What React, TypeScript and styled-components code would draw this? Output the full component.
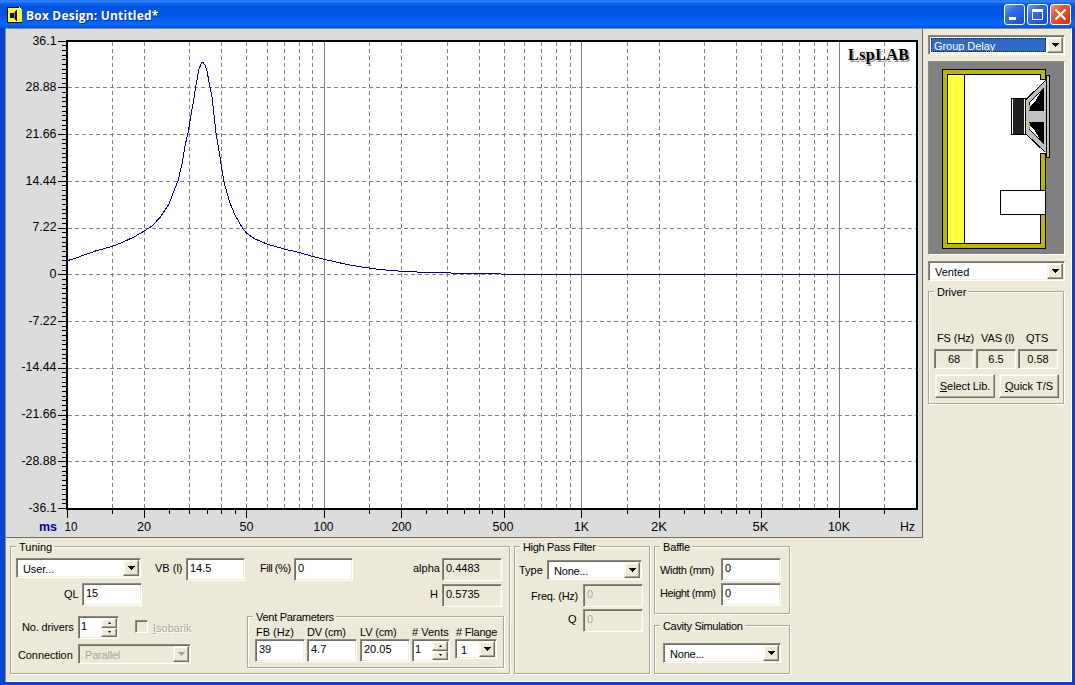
import React from "react";
import styled, { createGlobalStyle, css } from "styled-components";

const face = "#ece9d8";
const shade = "#aca899";
const dark = "#716f64";

const GlobalStyle = createGlobalStyle`
  * { box-sizing: border-box; }
  html, body { margin: 0; padding: 0; overflow: hidden; }
  body { font-family: "Liberation Sans", Arial, sans-serif; font-size: 11px; line-height: 13px; color: #000; }
`;

const Window = styled.div`
  width: 1075px;
  height: 685px;
  display: flex;
  flex-direction: column;
  background: ${face};
  border-style: solid;
  border-width: 0 3px 3px 5px;
  border-color: #0842d0;
  box-shadow: inset 1px 0 0 #7d8fae, inset -1px -1px 0 #fff;
`;

const TitleBar = styled.header`
  height: 28px;
  flex: none;
  margin: 0 -3px 0 -5px;
  padding: 1px 4px 0 7px;
  display: flex;
  align-items: center;
  background: linear-gradient(#1c6af0 0, #3a8cff 1px, #1468f0 3px, #0055e2 6px, #0054e3 14px, #0560f6 20px, #0668ff 25px, #0450d8 28px);
`;

const Title = styled.h1`
  flex: 1;
  margin: 2px 0 0 4px;
  font: bold 12px/16px "Open Sans", "Noto Sans", sans-serif;
  letter-spacing: 0.2px;
  color: #fff;
  text-shadow: 1px 1px 0 #0a2f86;
`;

const CaptionButton = styled.button<{ $close?: boolean }>`
  width: 21px;
  height: 21px;
  margin-left: 2px;
  padding: 0;
  display: flex;
  border: 1px solid #fff;
  border-radius: 3px;
  background: ${(p) =>
    p.$close
      ? "linear-gradient(135deg, #f0a088 0, #e0603c 30%, #d8421a 75%, #b83410 100%)"
      : "linear-gradient(135deg, #7ca4f4 0, #3c70e8 30%, #2258dc 75%, #1c48c0 100%)"};
  svg { display: block; }
`;

const Client = styled.main`
  flex: 1;
  display: flex;
  flex-direction: column;
  margin-right: 1px;
  border-top: 1px solid #8d8b80;
  border-left: 1px solid #8d8b80;
`;

const Upper = styled.section`
  height: 509px;
  display: flex;
`;

const ChartPanel = styled.div`
  width: 917px;
  height: 509px;
  background: #dcdcdc;
  border-right: 1px solid ${dark};
  border-bottom: 1px solid ${dark};
  svg { display: block; }
`;

const SidePanel = styled.aside`
  width: 142px;
  padding: 6px 0 0 5px;
  display: flex;
  flex-direction: column;
`;

const Diagram = styled.div`
  width: 137px;
  height: 194px;
  margin: 6px 0;
  border: 1px solid;
  border-color: #8d8b80 #fff #fff #8d8b80;
  background: #808080;
  svg { display: block; margin: -1px; }
`;

const Lower = styled.section`
  display: flex;
  gap: 4px;
  padding: 8px 0 0 4px;
`;

const Stack = styled.div`
  display: flex;
  flex-direction: column;
`;

const GroupBox = styled.fieldset<{ $w: number; $h: number }>`
  width: ${(p) => p.$w}px;
  height: ${(p) => p.$h}px;
  min-width: 0;
  margin: 0;
  padding: 0;
  display: block;
  border: 1px solid ${shade};
  box-shadow: 1px 1px 0 #fff, inset 1px 1px 0 #fff;
`;

const GroupTitle = styled.div<{ $ls?: number }>`
  width: fit-content;
  height: 13px;
  margin: -6px 0 -1px 5px;
  padding: 0 2px 0 3px;
  background: ${face};
  letter-spacing: ${(p) => p.$ls ?? 0}px;
  white-space: nowrap;
`;

const Row = styled.div<{ $top?: number; $left?: number }>`
  display: flex;
  align-items: flex-start;
  margin: ${(p) => p.$top ?? 0}px 0 0 ${(p) => p.$left ?? 0}px;
`;

const Label = styled.label<{ $w: number; $ls?: number; $top?: number; $left?: number; $off?: boolean }>`
  flex: none;
  width: ${(p) => p.$w}px;
  margin: ${(p) => p.$top ?? 0}px 0 0 ${(p) => p.$left ?? 0}px;
  letter-spacing: ${(p) => p.$ls ?? 0}px;
  white-space: nowrap;
  ${(p) => p.$off && css`color: ${shade}; text-shadow: 1px 1px 0 #fff;`}
`;

const sunken = css`
  border: 1px solid;
  border-color: #8d8b80 #fff #fff #8d8b80;
  box-shadow: inset 1px 1px 0 ${dark}, inset -1px -1px 0 #f1efe2;
`;

const raised = css`
  border: 1px solid;
  border-color: #f8f6ee ${dark} ${dark} #f8f6ee;
  box-shadow: inset -1px -1px 0 ${shade}, inset 1px 1px 0 #fff;
  background: ${face};
`;

const Field = styled.div<{ $w: number; $h?: number; $left?: number; $top?: number; $face?: boolean; $off?: boolean; $center?: boolean }>`
  flex: none;
  width: ${(p) => p.$w}px;
  height: ${(p) => p.$h ?? 23}px;
  margin: ${(p) => p.$top ?? 0}px 0 0 ${(p) => p.$left ?? 0}px;
  padding: ${(p) => (p.$center ? "3px 0 0" : "3px 0 0 3px")};
  text-align: ${(p) => (p.$center ? "center" : "left")};
  background: ${(p) => (p.$face ? face : "#fff")};
  color: ${(p) => (p.$off ? shade : "#000")};
  ${sunken}
`;

const SelectBox = styled.div<{ $w: number; $left?: number; $top?: number; $off?: boolean }>`
  flex: none;
  display: flex;
  width: ${(p) => p.$w}px;
  height: 20px;
  margin: ${(p) => p.$top ?? 0}px 0 0 ${(p) => p.$left ?? 0}px;
  padding: 1px;
  background: ${(p) => (p.$off ? face : "#fff")};
  color: ${(p) => (p.$off ? shade : "#000")};
  ${sunken}
`;

const SelectText = styled.span<{ $hot?: boolean; $ls?: number; $pad?: number }>`
  flex: 1;
  margin: 1px;
  padding: 1px 0 0 ${(p) => p.$pad ?? 4}px;
  line-height: 14px;
  letter-spacing: ${(p) => p.$ls ?? 0}px;
  white-space: nowrap;
  ${(p) => p.$hot && css`background: #316ac5; color: #fff; outline: 1px dotted #0a1e48; outline-offset: -1px;`}
`;

const DropButton = styled.span`
  width: 16px;
  display: flex;
  align-items: center;
  justify-content: center;
  ${raised}
`;

const Spinner = styled.div<{ $w: number; $left?: number }>`
  flex: none;
  display: flex;
  width: ${(p) => p.$w}px;
  height: 23px;
  margin-left: ${(p) => p.$left ?? 0}px;
  padding: 1px;
  background: #fff;
  ${sunken}
`;

const SpinText = styled.span`
  flex: 1;
  padding: 2px 0 0 1px;
`;

const SpinButtons = styled.span`
  width: 16px;
  display: grid;
  grid-template-rows: 1fr 1fr;
`;

const SpinButton = styled.span`
  display: flex;
  align-items: center;
  justify-content: center;
  ${raised}
`;

const Check = styled.span<{ $left: number; $top: number }>`
  width: 13px;
  height: 13px;
  margin: ${(p) => p.$top}px 0 0 ${(p) => p.$left}px;
  background: ${face};
  ${sunken}
`;

const PushButton = styled.button<{ $w: number; $ls?: number }>`
  width: ${(p) => p.$w}px;
  height: 24px;
  padding: 0;
  font: 11px/13px "Liberation Sans", Arial, sans-serif;
  letter-spacing: ${(p) => p.$ls ?? 0}px;
  color: #000;
  white-space: nowrap;
  ${raised}
  u { text-underline-offset: 1px; }
`;

function Arrow({ off }: { off?: boolean }) {
  return (
    <svg width="7" height="4" shapeRendering="crispEdges">
      <path d="M0 0H7L3.5 4Z" fill={off ? shade : "#000"} />
    </svg>
  );
}

type SelectProps = { w: number; text: string; left?: number; top?: number; off?: boolean; hot?: boolean; ls?: number; pad?: number };
function Select({ w, text, left, top, off, hot, ls, pad }: SelectProps) {
  return (
    <SelectBox $w={w} $left={left} $top={top} $off={off}>
      <SelectText $hot={hot} $ls={ls} $pad={pad}>{text}</SelectText>
      <DropButton><Arrow off={off} /></DropButton>
    </SelectBox>
  );
}

function Spin({ w, value, left }: { w: number; value: string; left?: number }) {
  return (
    <Spinner $w={w} $left={left}>
      <SpinText>{value}</SpinText>
      <SpinButtons>
        <SpinButton><svg width="3" height="2"><path d="M0 2L1.5 0L3 2Z" /></svg></SpinButton>
        <SpinButton><svg width="3" height="2"><path d="M0 0H3L1.5 2Z" /></svg></SpinButton>
      </SpinButtons>
    </Spinner>
  );
}

const plot = { left: 67, top: 41, width: 850, height: 468 };
const xOf = (f: number) => Math.floor(67 + 257.4 * Math.log10(f / 10)) + 0.5;
const yOf = (i: number) => Math.floor(41 + 46.75 * i) + 0.5;

const yLabels: [string, number][] = [
  ["36.1", 24], ["28.88", 31], ["21.66", 31], ["14.44", 31], ["7.22", 24], ["0", 7],
  ["-7.22", 28], ["-14.44", 35], ["-21.66", 35], ["-28.88", 35], ["-36.1", 28],
];
const xLabels: [string, number, number][] = [
  ["10", 64.5, 13], ["20", 137, 14], ["50", 239.5, 14], ["100", 313.5, 20], ["200", 391.5, 20], ["500", 492.5, 21],
  ["1K", 574, 15], ["2K", 651, 16], ["5K", 752.5, 16], ["10K", 828, 22], ["Hz", 900, 15],
];
const dashed: number[] = [];
const shortTicks: number[] = [];
for (const d of [10, 100, 1000, 10000]) {
  for (const m of [1.5, 2, 3, 4, 5, 6, 7, 8, 9]) if (m * d < 20000) dashed.push(m * d);
  for (const m of [1.5, 2.5, 3, 3.5, 4, 4.5]) if (m * d < 20000) shortTicks.push(m * d);
}
const longTicks = [10, 20, 50, 100, 200, 500, 1000, 2000, 5000, 10000];

const curve =
  "68,260.5 76,258 84,255 97,250.5 112,246.5 122,242.5 134,237 145,230.5 152,226 160,217.5 169,204 175,188 178,181 182,164 185,146 188,133 191,115 194,98 196,85 199,69 201,64 202,62.5 203,62.5 205,65 207,71 209,82 212,97 214,115 216,133 219,151 222,170 224,182 227,193 230,203 235,215 243,229 247,233.5 255,239 267,244 284,249 299,252.5 313,256.5 325,259.5 345,264 360,266.8 380,269.5 402,271.3 430,272.6 460,273.2 500,273.5 502,274.5 917,274.5";

function DelayChart() {
  return (
    <svg width="916" height="508" viewBox="6 29 916 508" fontFamily="Liberation Sans, Arial, sans-serif" fontSize="13">
      <g shapeRendering="crispEdges">
        <rect x={plot.left} y={plot.top} width={plot.width} height={plot.height} fill="#fff" />
        <g stroke="#808080" strokeDasharray="4 3">
          {dashed.map((f) => <line key={f} x1={xOf(f)} x2={xOf(f)} y1={42} y2={508} />)}
          {[1, 2, 3, 4, 5, 6, 7, 8, 9].map((i) => <line key={i} x1={68} x2={916} y1={yOf(i)} y2={yOf(i)} />)}
        </g>
        <g stroke="#808080">
          {[100, 1000, 10000].map((f) => <line key={f} x1={xOf(f)} x2={xOf(f)} y1={42} y2={508} />)}
        </g>
        <polyline points={curve} fill="none" stroke="#000090" />
        <rect x={plot.left} y={plot.top} width={plot.width} height={plot.height} fill="none" stroke="#000" strokeWidth={2} />
        <g stroke="#000">
          {Array.from({ length: 101 }, (_, i) => (
            <line key={i} x1={i % 10 ? 62 : 58} x2={66} y1={yOf(i / 10)} y2={yOf(i / 10)} />
          ))}
          {shortTicks.map((f) => <line key={f} x1={xOf(f)} x2={xOf(f)} y1={509} y2={514} />)}
          {longTicks.map((f) => <line key={f} x1={xOf(f)} x2={xOf(f)} y1={509} y2={518} />)}
        </g>
      </g>
      {yLabels.map(([t, w], i) => (
        <text key={t} x={56.5 - w} y={Math.floor(45 + 46.7 * i)} textLength={w} lengthAdjust="spacingAndGlyphs">{t}</text>
      ))}
      {xLabels.map(([t, x, w]) => (
        <text key={t} x={x} y={531} textLength={w} lengthAdjust="spacingAndGlyphs">{t}</text>
      ))}
      <text x={39} y={531} fill="#000099" fontWeight="bold" textLength={18} lengthAdjust="spacingAndGlyphs">ms</text>
      <g fontFamily="Liberation Serif, serif" fontWeight="bold" fontSize="16">
        <text x={849.5} y={61.5} fill="#a0a0a0" textLength={61}>LspLAB</text>
        <text x={848} y={60} textLength={61}>LspLAB</text>
      </g>
    </svg>
  );
}

function BoxDiagram() {
  return (
    <svg width="137" height="194" viewBox="928 61 137 194" shapeRendering="crispEdges">
      <rect x="942.5" y="69.5" width="103" height="179" fill="#b8b800" stroke="#000" />
      <rect x="947.5" y="74.5" width="93" height="169" fill="#fff" stroke="#000" />
      <rect x="947.5" y="74.5" width="17" height="169" fill="#ffff40" stroke="#000" />
      <rect x="1040" y="79" width="6" height="75" fill="#fff" />
      <path d="M1040.5 74V79.5H1045.5M1040.5 158V153.5H1045.5" fill="none" stroke="#000" />
      <path d="M1026 99L1045.5 81V152L1026 134Z" fill="#c0c0c0" />
      <path d="M1026 99.5L1045.5 80.5M1026 134L1045.5 152.5" stroke="#000" />
      <path d="M1029 102L1044 87V111H1029Z M1029 122H1044V145L1029 130Z" fill="#000" />
      <path d="M1030 103L1041 91L1035 102L1030 106Z M1030 129L1041 141L1035 131L1030 126Z" fill="#fff" />
      <path d="M1029.5 105V110M1029.5 123V129" stroke="#b8b800" />
      <rect x="1046.5" y="75.5" width="3" height="82" fill="#c0c0c0" stroke="#000" />
      <rect x="1011.5" y="98.5" width="14" height="36" fill="#202020" stroke="#000" />
      <path d="M1012.5 99V134M1024.5 99V134" stroke="#fff" />
      <rect x="1000.5" y="190.5" width="45" height="24" fill="#fff" stroke="#000" />
    </svg>
  );
}

function AppIcon() {
  return (
    <svg width="15" height="16" shapeRendering="crispEdges">
      <path d="M0 0H12L15 3V16H0Z" fill="#ffff20" />
      <path d="M0.500 0V15.500H15M0 0.500H12" fill="none" stroke="#101010" />
      <path d="M12 0L15 3H12Z" fill="#fff" />
      <path d="M3 6H6V11H3Z M6 6L10 2V14L6 11Z" fill="#101040" />
      <path d="M7.500 5V12" stroke="#8080a0" />
    </svg>
  );
}

export default function App() {
  return (
    <>
      <GlobalStyle />
      <Window>
        <TitleBar>
          <AppIcon />
          <Title>Box Design: Untitled*</Title>
          <CaptionButton aria-label="Minimize">
            <svg width="19" height="19"><rect x="4" y="12" width="7" height="3" fill="#fff" /></svg>
          </CaptionButton>
          <CaptionButton aria-label="Maximize">
            <svg width="19" height="19" shapeRendering="crispEdges"><path d="M4 4H15V15H4Z M5 7V14H14V7Z" fill="#fff" fillRule="evenodd" /></svg>
          </CaptionButton>
          <CaptionButton $close aria-label="Close">
            <svg width="19" height="19"><path d="M4.500 4.500L14.500 14.500M14.500 4.500L4.500 14.500" stroke="#fff" strokeWidth="2.200" /></svg>
          </CaptionButton>
        </TitleBar>
        <Client>
          <Upper>
            <ChartPanel><DelayChart /></ChartPanel>
            <SidePanel>
              <Select w={137} text="Group Delay" hot ls={-0.05} pad={3} />
              <Diagram><BoxDiagram /></Diagram>
              <Select w={137} text="Vented" />
              <Row $top={10}>
                <GroupBox $w={136} $h={113}>
                  <GroupTitle>Driver</GroupTitle>
                  <Row $top={34} $left={8}>
                    <Label $w={44} $ls={-0.1}>FS (Hz)</Label>
                    <Label $w={45} $ls={-0.1}>VAS (l)</Label>
                    <Label $w={30} $ls={-0.2}>QTS</Label>
                  </Row>
                  <Row $top={4} $left={5}>
                    <Field $w={40} $h={20} $face $center>68</Field>
                    <Field $w={40} $h={20} $left={2} $face $center>6.5</Field>
                    <Field $w={40} $h={20} $left={2} $face $center>0.58</Field>
                  </Row>
                  <Row $top={5} $left={6}>
                    <PushButton $w={60} $ls={-0.1}><u>S</u>elect Lib.</PushButton>
                    <Row $left={4}><PushButton $w={60}><u>Q</u>uick T/S</PushButton></Row>
                  </Row>
                </GroupBox>
              </Row>
            </SidePanel>
          </Upper>
          <Lower>
            <GroupBox $w={500} $h={128}>
              <GroupTitle>Tuning</GroupTitle>
              <Row $top={5} $left={5}>
                <Select w={125} text="User..." ls={-0.1} />
                <Label $w={31} $left={14} $top={4}>VB (l)</Label>
                <Field $w={59}>14.5</Field>
                <Label $w={34} $left={15} $top={4} $ls={-0.45}>Fill (%)</Label>
                <Field $w={59}>0</Field>
                <Label $w={29} $left={60} $top={4}>alpha</Label>
                <Field $w={60} $face>0.4483</Field>
              </Row>
              <Row $top={2} $left={53}>
                <Label $w={18} $top={5}>QL</Label>
                <Field $w={60}>15</Field>
                <Label $w={12} $left={288} $top={5}>H</Label>
                <Field $w={60} $top={1} $face>0.5735</Field>
              </Row>
              <Row $top={9}>
                <Stack>
                  <Row $left={11}>
                    <Label $w={56} $top={5} $ls={-0.15}>No. drivers</Label>
                    <Spin w={41} value="1" />
                    <Check $left={16} $top={4} />
                    <Label $w={40} $left={5} $top={6} $off><u>I</u>sobarik</Label>
                  </Row>
                  <Row $top={5} $left={7}>
                    <Label $w={60} $top={5} $ls={-0.1}>Connection</Label>
                    <Select w={113} text="Parallel" off ls={-0.2} />
                  </Row>
                </Stack>
                <Row $left={54}>
                  <GroupBox $w={257} $h={52}>
                    <GroupTitle $ls={-0.28}>Vent Parameters</GroupTitle>
                    <Row $top={3} $left={8}>
                      <Label $w={51}>FB (Hz)</Label>
                      <Label $w={53} $ls={-0.25}>DV (cm)</Label>
                      <Label $w={52} $ls={-0.15}>LV (cm)</Label>
                      <Label $w={44}># Vents</Label>
                      <Label $w={45} $ls={-0.2}># Flange</Label>
                    </Row>
                    <Row $left={7}>
                      <Field $w={50}>39</Field>
                      <Field $w={50} $left={2}>4.7</Field>
                      <Field $w={50} $left={3}>20.05</Field>
                      <Spin w={38} left={2} value="1" />
                      <Select w={42} left={5} text="1" pad={3} />
                    </Row>
                  </GroupBox>
                </Row>
              </Row>
            </GroupBox>
            <GroupBox $w={136} $h={128}>
              <GroupTitle $ls={-0.32}>High Pass Filter</GroupTitle>
              <Row $top={7} $left={4}>
                <Label $w={28} $top={4}>Type</Label>
                <Select w={95} text="None..." ls={-0.2} />
              </Row>
              <Row $top={4} $left={16}>
                <Label $w={52} $top={6} $ls={-0.25}>Freq. (Hz)</Label>
                <Field $w={60} $face $off>0</Field>
              </Row>
              <Row $top={2} $left={53}>
                <Label $w={15} $top={4}>Q</Label>
                <Field $w={60} $face $off>0</Field>
              </Row>
            </GroupBox>
            <Stack>
              <GroupBox $w={136} $h={68}>
                <GroupTitle $ls={-0.15}>Baffle</GroupTitle>
                <Row $top={5} $left={5}>
                  <Label $w={61} $top={6} $ls={-0.3}>Width (mm)</Label>
                  <Field $w={60}>0</Field>
                </Row>
                <Row $top={2} $left={5}>
                  <Label $w={61} $top={4} $ls={-0.45}>Height (mm)</Label>
                  <Field $w={60}>0</Field>
                </Row>
              </GroupBox>
              <Row $top={11}>
                <GroupBox $w={136} $h={49}>
                  <GroupTitle $ls={-0.32}>Cavity Simulation</GroupTitle>
                  <Row $top={11} $left={8}>
                    <Select w={118} text="None..." ls={-0.2} />
                  </Row>
                </GroupBox>
              </Row>
            </Stack>
          </Lower>
        </Client>
      </Window>
    </>
  );
}
